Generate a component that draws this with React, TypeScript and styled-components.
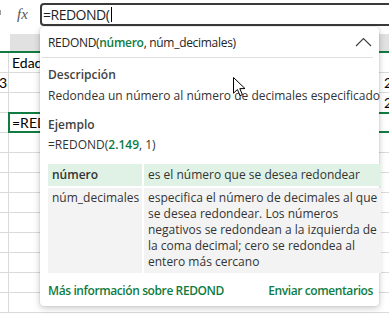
import styled, { createGlobalStyle } from "styled-components";

const GlobalStyle = createGlobalStyle`
  html, body {
    margin: 0;
    padding: 0;
    background: #ffffff;
  }
  body {
    font-family: "Open Sans", "Noto Sans", sans-serif;
    color: #242424;
  }
`;

// filas de la hoja: texto de columna A, B y C
const rows = [
  { a: "", b: "Edad", c: "" },
  { a: "3", b: "", c: "2" },
  { a: "", b: "", c: "2" },
  { a: "", b: "=REDOND(", c: "", active: true },
  { a: "", b: "", c: "" },
  { a: "", b: "", c: "" },
  { a: "", b: "", c: "" },
  { a: "", b: "", c: "" },
  { a: "", b: "", c: "" },
  { a: "", b: "", c: "" },
  { a: "", b: "", c: "" },
  { a: "", b: "", c: "" },
  { a: "", b: "", c: "" },
];

const descLines = [
  "especifica el número de decimales al que",
  "se desea redondear. Los números",
  "negativos se redondean a la izquierda de",
  "la coma decimal; cero se redondea al",
  "entero más cercano",
];

const App = () => {
  return (
    <>
      <GlobalStyle />
      <Page>
        <FormulaBar>
          <NameTick />
          <FxLabel>fx</FxLabel>
          <FormulaBox>
            =REDOND(
            <Caret />
          </FormulaBox>
        </FormulaBar>

        <ColumnHeader>
          <HeaderCorner />
          <HeaderCell />
        </ColumnHeader>

        {rows.map((row, i) => (
          <GridRow key={i}>
            <CellA>{row.a}</CellA>
            {row.active ? (
              <EditCell>{row.b}</EditCell>
            ) : (
              <>
                <CellB>{row.b}</CellB>
                <CellC>{row.c}</CellC>
              </>
            )}
          </GridRow>
        ))}

        <Popup>
          <PopupHeader>
            <Signature>
              REDOND(<Arg>número</Arg>, núm_decimales)
            </Signature>
            <svg width="17" height="10" viewBox="0 0 17 10">
              <polyline
                points="1,9 8.5,1.5 16,9"
                fill="none"
                stroke="#424242"
                strokeWidth="1.2"
              />
            </svg>
          </PopupHeader>
          <Divider />

          <PopupBody>
            <SectionTitle $top={8}>Descripción</SectionTitle>
            <BodyText $top={4}>
              Redondea un número al número de decimales especificado
            </BodyText>

            <SectionTitle $top={12}>Ejemplo</SectionTitle>
            <BodyText $top={3}>
              =REDOND(<Arg>2.149</Arg>, 1)
            </BodyText>

            <ArgTable>
              <ArgName $highlight>número</ArgName>
              <ArgDesc $highlight>es el número que se desea redondear</ArgDesc>
              <ArgName>núm_decimales</ArgName>
              <ArgDesc>
                {descLines.map((line) => (
                  <div key={line}>{line}</div>
                ))}
              </ArgDesc>
            </ArgTable>
          </PopupBody>

          <PopupFooter>
            <FooterLink>Más información sobre REDOND</FooterLink>
            <FooterLink>Enviar comentarios</FooterLink>
          </PopupFooter>
        </Popup>

        <MouseCursor width="13" height="20" viewBox="0 0 13 20">
          <path
            d="M0.5 0.5 L0.5 16.2 L4.4 12.5 L7 18.6 L9.4 17.6 L6.8 11.6 L12 11.6 Z"
            fill="#ffffff"
            stroke="#000000"
            strokeWidth="1"
            strokeLinejoin="round"
          />
        </MouseCursor>
      </Page>
    </>
  );
};

// CSS

const Page = styled.div`
  position: relative;
  width: 389px;
  height: 321px;
  overflow: hidden;
  background: #ffffff;
`;

const FormulaBar = styled.div`
  display: flex;
  align-items: flex-start;
  height: 30px;
  padding-top: 3px;
  box-sizing: border-box;
`;

const NameTick = styled.div`
  width: 1px;
  height: 5px;
  margin-top: 7px;
  background: #9e9e9e;
`;

const FxLabel = styled.div`
  width: 23px;
  margin-left: 16px;
  padding-top: 3px;
  font-family: "Liberation Serif", serif;
  font-style: italic;
  font-size: 15px;
  line-height: 16px;
  color: #555555;
`;

const FormulaBox = styled.div`
  flex: 1;
  display: flex;
  align-items: center;
  height: 23px;
  margin-right: -12px;
  padding-left: 1px;
  box-sizing: border-box;
  border: 2px solid #3a3a3a;
  border-radius: 4px;
  font-size: 14px;
  letter-spacing: -0.5px;
  color: #1f1f1f;
`;

const Caret = styled.span`
  display: inline-block;
  width: 1px;
  height: 15px;
  margin-left: 2px;
  background: #000000;
`;

const ColumnHeader = styled.div`
  display: flex;
  height: 19px;
  margin-top: 4px;
  box-sizing: border-box;
  border-bottom: 2px solid #107c41;
`;

const HeaderCorner = styled.div`
  width: 10px;
  background: #ffffff;
`;

const HeaderCell = styled.div`
  flex: 1;
  background: #e1e1e1;
`;

const GridRow = styled.div`
  display: flex;
  height: 20px;
  box-sizing: border-box;
  border-bottom: 1px solid #dadada;
  font-family: "Lato", "Open Sans", sans-serif;
  font-size: 14px;
  line-height: 19px;
  color: #000000;
`;

const CellA = styled.div`
  width: 9px;
  padding-right: 1px;
  box-sizing: border-box;
  border-right: 1px solid #dadada;
  display: flex;
  justify-content: flex-end;
  white-space: nowrap;
`;

const CellB = styled.div`
  flex: 1;
  padding-left: 3px;
  white-space: nowrap;
  overflow: hidden;
`;

const CellC = styled.div`
  width: 8px;
  padding-left: 3px;
  box-sizing: border-box;
  white-space: nowrap;
  overflow: hidden;
`;

const EditCell = styled.div`
  flex: 1;
  margin: -1px -10px -1px -1px;
  padding-left: 2px;
  border: 2px solid #107c41;
  white-space: nowrap;
  line-height: 18px;
`;

const Popup = styled.div`
  position: absolute;
  left: 40px;
  top: 27px;
  width: 339px;
  height: 279px;
  display: flex;
  flex-direction: column;
  background: #ffffff;
  border-radius: 4px;
  box-shadow: 0 2px 7px rgba(0, 0, 0, 0.22), 0 0 2px rgba(0, 0, 0, 0.14);
  font-size: 12px;
  color: #242424;
`;

const PopupHeader = styled.div`
  display: flex;
  align-items: center;
  justify-content: space-between;
  height: 30px;
  padding: 0 7px 0 8px;
  font-size: 12px;
  letter-spacing: -0.3px;
`;

const Signature = styled.div`
  padding-top: 1px;
  white-space: nowrap;
`;

const Arg = styled.span`
  color: #107c41;
  font-weight: 600;
`;

const Divider = styled.div`
  height: 1px;
  margin: 0 6px 0 2px;
  background: #e0e0e0;
`;

const PopupBody = styled.div`
  padding: 0 6px 0 8px;
`;

const SectionTitle = styled.div<{ $top: number }>`
  margin-top: ${(p) => p.$top}px;
  font-weight: 600;
  line-height: 17px;
  color: #424242;
`;

const BodyText = styled.div<{ $top: number }>`
  margin-top: ${(p) => p.$top}px;
  line-height: 17px;
  color: #333333;
  white-space: nowrap;
`;

const ArgTable = styled.div`
  display: grid;
  grid-template-columns: 94px 1fr;
  gap: 2px;
  margin-top: 11px;
  line-height: 16px;
  color: #333333;
`;

const ArgName = styled.div<{ $highlight?: boolean }>`
  padding: ${(p) => (p.$highlight ? "3px 4px" : "2px 4px 3px")};
  background: ${(p) => (p.$highlight ? "#dff2e5" : "#f3f3f3")};
  font-weight: ${(p) => (p.$highlight ? 600 : 400)};
  white-space: nowrap;
`;

const ArgDesc = styled.div<{ $highlight?: boolean }>`
  padding: ${(p) => (p.$highlight ? "3px 4px" : "2px 4px 3px")};
  background: ${(p) => (p.$highlight ? "#dff2e5" : "#f3f3f3")};
  white-space: nowrap;
`;

const PopupFooter = styled.div`
  display: flex;
  justify-content: space-between;
  margin-top: auto;
  padding: 0 6px 7px 8px;
  line-height: 17px;
`;

const FooterLink = styled.span`
  color: #107c41;
  font-weight: 600;
  letter-spacing: -0.4px;
`;

const MouseCursor = styled.svg`
  position: absolute;
  left: 233px;
  top: 77px;
`;

export default App;
